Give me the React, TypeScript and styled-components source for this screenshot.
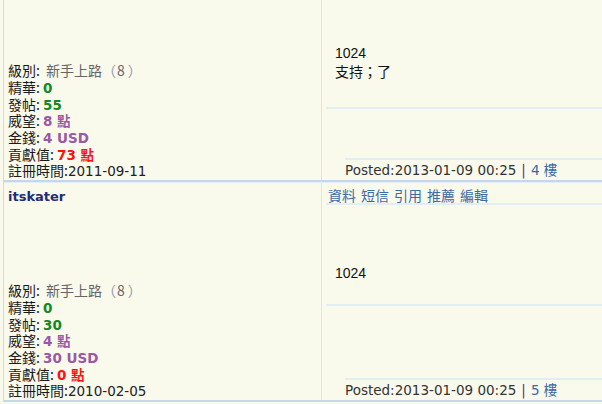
import React from 'react'
import styled, { createGlobalStyle } from 'styled-components'

const GlobalStyle = createGlobalStyle`
  html, body {
    margin: 0;
    padding: 0;
    background: #f9f9ec;
  }
  body {
    font-family: "DejaVu Sans", "Noto Sans CJK TC", sans-serif;
    font-size: 13px;
    color: #222;
  }
`

const Page = styled.div`
  width: 602px;
  height: 404px;
  overflow: hidden;
  padding-left: 3px;
  box-sizing: border-box;
  background: #f9f9ec;
`

const Table = styled.div`
  border-left: 1px solid #c6dbeb;
`

const Row = styled.div<{ $height: number; $first?: boolean }>`
  display: flex;
  height: ${p => p.$height}px;
  border-top: ${p => (p.$first ? 'none' : '1px solid #e3eef6')};
  border-bottom: 2px solid #c3d8e9;
`

const UserCell = styled.div`
  width: 318px;
  flex-shrink: 0;
  box-sizing: border-box;
  padding: 6px 4px 1px 4px;
  border-right: 1px solid #d6e8ef;
  display: flex;
  flex-direction: column;
  justify-content: space-between;
`

const UserName = styled.div`
  font-weight: bold;
  color: #1b2d7a;
  font-size: 13px;
  line-height: 16px;
`

const Stats = styled.div`
  font-family: "Noto Sans CJK TC", "DejaVu Sans", sans-serif;
  font-size: 14px;
`

const StatLine = styled.div`
  white-space: nowrap;
  height: 16.7px;
  line-height: 16.7px;
`

const Label = styled.span`
  color: #1a1a1a;
`

const Value = styled.span<{ $tone: 'green' | 'purple' | 'red' | 'plain' }>`
  font-family: "DejaVu Sans", "Noto Sans CJK TC", sans-serif;
  font-size: 13.5px;
  font-weight: ${p => (p.$tone === 'plain' ? 'normal' : 'bold')};
  color: ${p =>
    ({
      green: '#12891f',
      purple: '#9a58a6',
      red: '#ff1010',
      plain: '#222',
    })[p.$tone]};
`

const Level = styled.span`
  color: #666;
  margin-left: 6px;
`

const Paren = styled.span`
  color: #8a9bb0;
`

const LevelNum = styled.span`
  margin: 0 3px 0 1px;
`

const PostCell = styled.div`
  flex: 1;
  display: flex;
  flex-direction: column;
  padding-left: 4px;
  min-width: 0;
`

const Actions = styled.div`
  display: flex;
  gap: 5px;
  padding: 5px 0 0 2px;
  height: 22px;
  box-sizing: border-box;
  border-bottom: 2px solid #e1eef4;
  font-family: "Noto Sans CJK TC", sans-serif;
  font-size: 14px;
  line-height: 15px;
`

const ActionLink = styled.a`
  color: #3a6aa8;
  text-decoration: none;
`

const Content = styled.div<{ $top: number; $height: number }>`
  height: ${p => p.$height}px;
  box-sizing: border-box;
  padding: ${p => p.$top}px 0 0 9px;
  border-bottom: 2px solid #e1eef4;
  font-family: "Liberation Sans", "Noto Sans CJK TC", sans-serif;
  font-size: 14px;
  line-height: 19px;
  color: #111;
`

const Spacer = styled.div`
  flex: 1;
`

const Footer = styled.div`
  margin-left: 19px;
  margin-bottom: 2px;
  border-top: 2px solid #e1eef4;
  padding-top: 2px;
  height: 20px;
  box-sizing: border-box;
  font-size: 13.5px;
  line-height: 17px;
  color: #333;
  white-space: nowrap;
`

const Divider = styled.span`
  color: #7a1a7a;
  margin: 0 5px;
`

const Floor = styled.span`
  color: #3a6aa8;
`

type Post = {
  name?: string
  posts: string
  prestige: string
  money: string
  contribution: string
  joined: string
  lines: string[]
  posted: string
  floor: number
  height: number
  contentTop: number
  contentHeight: number
  actions: boolean
}

const posts: Post[] = [
  {
    posts: '55',
    prestige: '8 點',
    money: '4 USD',
    contribution: '73 點',
    joined: '2011-09-11',
    lines: ['1024', '支持；了'],
    posted: '2013-01-09 00:25',
    floor: 4,
    height: 180,
    contentTop: 44,
    contentHeight: 109,
    actions: false,
  },
  {
    name: 'itskater',
    posts: '30',
    prestige: '4 點',
    money: '30 USD',
    contribution: '0 點',
    joined: '2010-02-05',
    lines: ['1024'],
    posted: '2013-01-09 00:25',
    floor: 5,
    height: 217,
    contentTop: 59,
    contentHeight: 101,
    actions: true,
  },
]

function PostRow({ post, first }: { post: Post; first?: boolean }) {
  return (
    <Row $height={post.height} $first={first}>
      <UserCell>
        {post.name ? <UserName>{post.name}</UserName> : <span />}
        <Stats>
          <StatLine>
            <Label>級別:</Label>
            <Level>
              新手上路<Paren>（</Paren>
              <LevelNum>8</LevelNum>
              <Paren>）</Paren>
            </Level>
          </StatLine>
          <StatLine>
            <Label>精華: </Label>
            <Value $tone="green">0</Value>
          </StatLine>
          <StatLine>
            <Label>發帖: </Label>
            <Value $tone="green">{post.posts}</Value>
          </StatLine>
          <StatLine>
            <Label>威望: </Label>
            <Value $tone="purple">{post.prestige}</Value>
          </StatLine>
          <StatLine>
            <Label>金錢: </Label>
            <Value $tone="purple">{post.money}</Value>
          </StatLine>
          <StatLine>
            <Label>貢獻值: </Label>
            <Value $tone="red">{post.contribution}</Value>
          </StatLine>
          <StatLine>
            <Label>註冊時間:</Label>
            <Value $tone="plain">{post.joined}</Value>
          </StatLine>
        </Stats>
      </UserCell>
      <PostCell>
        {post.actions && (
          <Actions>
            <ActionLink href="#">資料</ActionLink>
            <ActionLink href="#">短信</ActionLink>
            <ActionLink href="#">引用</ActionLink>
            <ActionLink href="#">推薦</ActionLink>
            <ActionLink href="#">編輯</ActionLink>
          </Actions>
        )}
        <Content $top={post.contentTop} $height={post.contentHeight}>
          {post.lines.map(l => (
            <div key={l}>{l}</div>
          ))}
        </Content>
        <Spacer />
        <Footer>
          Posted:{post.posted}
          <Divider>|</Divider>
          <Floor>{post.floor} 樓</Floor>
        </Footer>
      </PostCell>
    </Row>
  )
}

export default function App() {
  return (
    <Page>
      <GlobalStyle />
      <Table>
        {posts.map((p, i) => (
          <PostRow key={p.floor} post={p} first={i === 0} />
        ))}
      </Table>
    </Page>
  )
}
